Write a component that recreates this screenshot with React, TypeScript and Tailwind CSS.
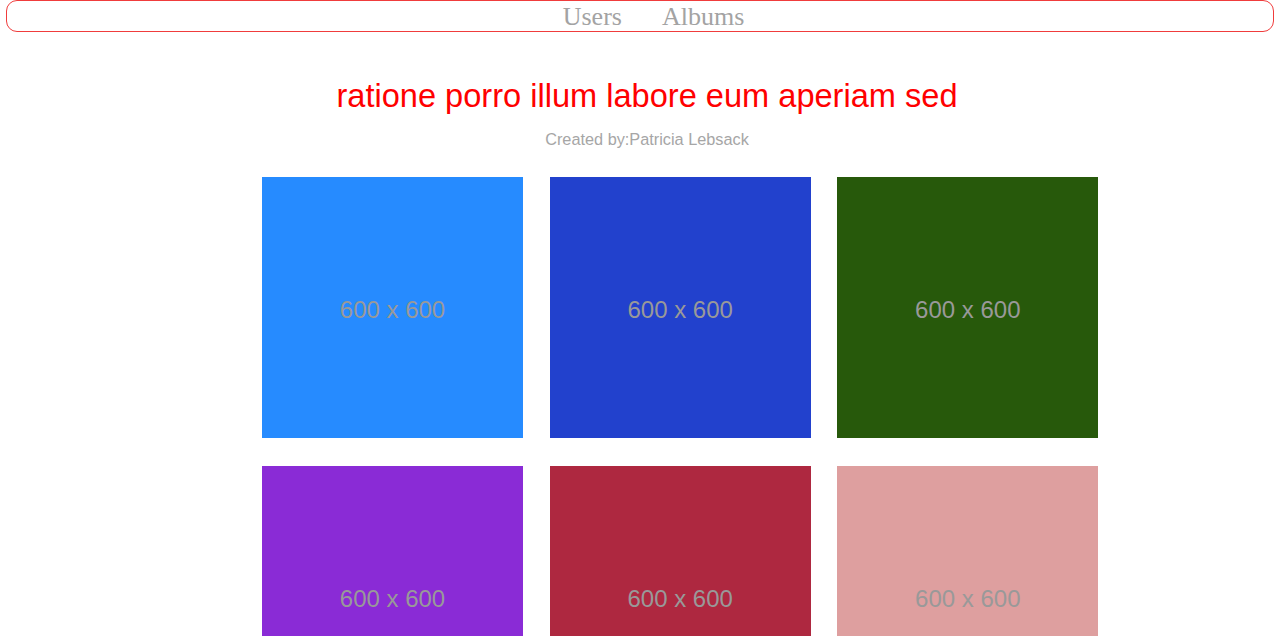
const photos = [
  { id: 1, color: 'bg-[#268bff]' },
  { id: 2, color: 'bg-[#2241cd]' },
  { id: 3, color: 'bg-[#27590b]' },
  { id: 4, color: 'bg-[#8a2bd6]' },
  { id: 5, color: 'bg-[#ae2840]' },
  { id: 6, color: 'bg-[#de9f9f]' },
]

function Nav() {
  return (
    <nav className="mx-[6px] h-[32px] rounded-[11px] border border-[#f03c3c]">
      <ul className="flex h-full items-center justify-center gap-[40px] pl-[27px] pt-[2px] font-['Liberation_Serif',serif] text-[26px] leading-none text-[#a3a3a3]">
        <li>Users</li>
        <li>Albums</li>
      </ul>
    </nav>
  )
}

function Placeholder({ color }: { color: string }) {
  return (
    <div
      className={`flex h-[261px] w-[261px] items-center justify-center ${color} font-['Liberation_Sans',Arial,sans-serif] text-[24px] text-[#999999]`}
    >
      <span className="pt-[4px]">600 x 600</span>
    </div>
  )
}

export default function App() {
  return (
    <div className="min-h-screen bg-white font-['Liberation_Sans',Arial,sans-serif]">
      <Nav />
      <div className="pl-[14px] pt-[46px] text-center">
        <h1 className="text-[32.6px] leading-[36px] text-[#ff0000]">
          ratione porro illum labore eum aperiam sed
        </h1>
        <p className="mt-[16px] text-[16.3px] leading-[18px] text-[#a6a6a6]">
          Created by:Patricia Lebsack
        </p>
      </div>
      <div className="ml-[262px] mt-[29px] grid w-[836px] grid-cols-3 gap-x-[27px] gap-y-[28px]">
        {photos.map((p) => (
          <Placeholder key={p.id} color={p.color} />
        ))}
      </div>
    </div>
  )
}
